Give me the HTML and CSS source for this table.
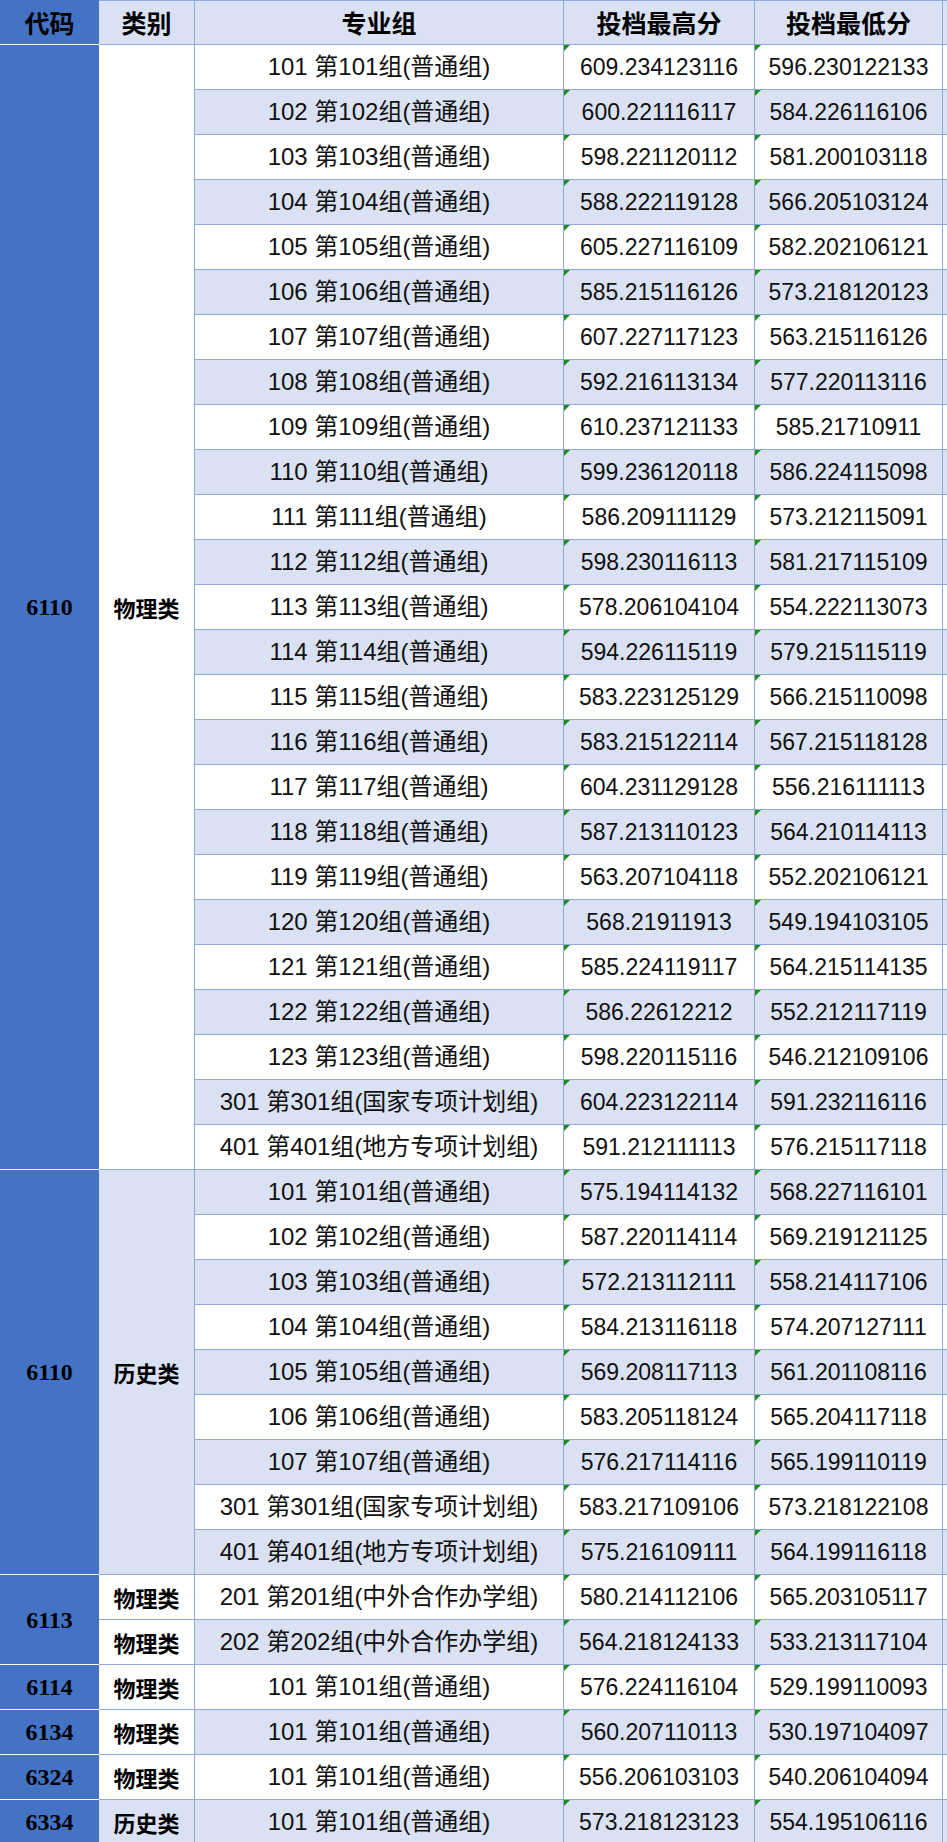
FILE: index.html
```html
<!DOCTYPE html>
<html lang="zh-CN">
<head>
<meta charset="utf-8">
<title>投档分数</title>
<link rel="stylesheet" href="styles.css">
</head>
<body>
<table class="sheet">
<colgroup>
<col class="c-code"><col class="c-cat"><col class="c-grp"><col class="c-max"><col class="c-min"><col class="c-pad">
</colgroup>
<thead>
<tr><th class="code">代码</th><th>类别</th><th>专业组</th><th>投档最高分</th><th>投档最低分</th><th class="pad"></th></tr>
</thead>
<tbody>
<tr><td class="code" rowspan="25">6110</td><td class="cat cat-w" rowspan="25">物理类</td><td class="grp">101 第101组(普通组)</td><td class="num">609.234123116</td><td class="num">596.230122133</td><td class="pad"></td></tr>
<tr><td class="grp">102 第102组(普通组)</td><td class="num">600.221116117</td><td class="num">584.226116106</td><td class="pad"></td></tr>
<tr><td class="grp">103 第103组(普通组)</td><td class="num">598.221120112</td><td class="num">581.200103118</td><td class="pad"></td></tr>
<tr><td class="grp">104 第104组(普通组)</td><td class="num">588.222119128</td><td class="num">566.205103124</td><td class="pad"></td></tr>
<tr><td class="grp">105 第105组(普通组)</td><td class="num">605.227116109</td><td class="num">582.202106121</td><td class="pad"></td></tr>
<tr><td class="grp">106 第106组(普通组)</td><td class="num">585.215116126</td><td class="num">573.218120123</td><td class="pad"></td></tr>
<tr><td class="grp">107 第107组(普通组)</td><td class="num">607.227117123</td><td class="num">563.215116126</td><td class="pad"></td></tr>
<tr><td class="grp">108 第108组(普通组)</td><td class="num">592.216113134</td><td class="num">577.220113116</td><td class="pad"></td></tr>
<tr><td class="grp">109 第109组(普通组)</td><td class="num">610.237121133</td><td class="num">585.21710911</td><td class="pad"></td></tr>
<tr><td class="grp">110 第110组(普通组)</td><td class="num">599.236120118</td><td class="num">586.224115098</td><td class="pad"></td></tr>
<tr><td class="grp">111 第111组(普通组)</td><td class="num">586.209111129</td><td class="num">573.212115091</td><td class="pad"></td></tr>
<tr><td class="grp">112 第112组(普通组)</td><td class="num">598.230116113</td><td class="num">581.217115109</td><td class="pad"></td></tr>
<tr><td class="grp">113 第113组(普通组)</td><td class="num">578.206104104</td><td class="num">554.222113073</td><td class="pad"></td></tr>
<tr><td class="grp">114 第114组(普通组)</td><td class="num">594.226115119</td><td class="num">579.215115119</td><td class="pad"></td></tr>
<tr><td class="grp">115 第115组(普通组)</td><td class="num">583.223125129</td><td class="num">566.215110098</td><td class="pad"></td></tr>
<tr><td class="grp">116 第116组(普通组)</td><td class="num">583.215122114</td><td class="num">567.215118128</td><td class="pad"></td></tr>
<tr><td class="grp">117 第117组(普通组)</td><td class="num">604.231129128</td><td class="num">556.216111113</td><td class="pad"></td></tr>
<tr><td class="grp">118 第118组(普通组)</td><td class="num">587.213110123</td><td class="num">564.210114113</td><td class="pad"></td></tr>
<tr><td class="grp">119 第119组(普通组)</td><td class="num">563.207104118</td><td class="num">552.202106121</td><td class="pad"></td></tr>
<tr><td class="grp">120 第120组(普通组)</td><td class="num">568.21911913</td><td class="num">549.194103105</td><td class="pad"></td></tr>
<tr><td class="grp">121 第121组(普通组)</td><td class="num">585.224119117</td><td class="num">564.215114135</td><td class="pad"></td></tr>
<tr><td class="grp">122 第122组(普通组)</td><td class="num">586.22612212</td><td class="num">552.212117119</td><td class="pad"></td></tr>
<tr><td class="grp">123 第123组(普通组)</td><td class="num">598.220115116</td><td class="num">546.212109106</td><td class="pad"></td></tr>
<tr><td class="grp">301 第301组(国家专项计划组)</td><td class="num">604.223122114</td><td class="num">591.232116116</td><td class="pad"></td></tr>
<tr><td class="grp">401 第401组(地方专项计划组)</td><td class="num">591.212111113</td><td class="num">576.215117118</td><td class="pad"></td></tr>
<tr><td class="code" rowspan="9">6110</td><td class="cat cat-b" rowspan="9">历史类</td><td class="grp">101 第101组(普通组)</td><td class="num">575.194114132</td><td class="num">568.227116101</td><td class="pad"></td></tr>
<tr><td class="grp">102 第102组(普通组)</td><td class="num">587.220114114</td><td class="num">569.219121125</td><td class="pad"></td></tr>
<tr><td class="grp">103 第103组(普通组)</td><td class="num">572.213112111</td><td class="num">558.214117106</td><td class="pad"></td></tr>
<tr><td class="grp">104 第104组(普通组)</td><td class="num">584.213116118</td><td class="num">574.207127111</td><td class="pad"></td></tr>
<tr><td class="grp">105 第105组(普通组)</td><td class="num">569.208117113</td><td class="num">561.201108116</td><td class="pad"></td></tr>
<tr><td class="grp">106 第106组(普通组)</td><td class="num">583.205118124</td><td class="num">565.204117118</td><td class="pad"></td></tr>
<tr><td class="grp">107 第107组(普通组)</td><td class="num">576.217114116</td><td class="num">565.199110119</td><td class="pad"></td></tr>
<tr><td class="grp">301 第301组(国家专项计划组)</td><td class="num">583.217109106</td><td class="num">573.218122108</td><td class="pad"></td></tr>
<tr><td class="grp">401 第401组(地方专项计划组)</td><td class="num">575.216109111</td><td class="num">564.199116118</td><td class="pad"></td></tr>
<tr><td class="code" rowspan="2">6113</td><td class="cat cat-w">物理类</td><td class="grp">201 第201组(中外合作办学组)</td><td class="num">580.214112106</td><td class="num">565.203105117</td><td class="pad"></td></tr>
<tr><td class="cat cat-w">物理类</td><td class="grp">202 第202组(中外合作办学组)</td><td class="num">564.218124133</td><td class="num">533.213117104</td><td class="pad"></td></tr>
<tr><td class="code">6114</td><td class="cat cat-w">物理类</td><td class="grp">101 第101组(普通组)</td><td class="num">576.224116104</td><td class="num">529.199110093</td><td class="pad"></td></tr>
<tr><td class="code">6134</td><td class="cat cat-w">物理类</td><td class="grp">101 第101组(普通组)</td><td class="num">560.207110113</td><td class="num">530.197104097</td><td class="pad"></td></tr>
<tr><td class="code">6324</td><td class="cat cat-w">物理类</td><td class="grp">101 第101组(普通组)</td><td class="num">556.206103103</td><td class="num">540.206104094</td><td class="pad"></td></tr>
<tr><td class="code">6334</td><td class="cat cat-b">历史类</td><td class="grp">101 第101组(普通组)</td><td class="num">573.218123123</td><td class="num">554.195106116</td><td class="pad"></td></tr>
</tbody>
</table>
</body>
</html>
```
FILE: styles.css
```css
html, body {
  margin: 0;
  padding: 0;
  background: #ffffff;
}

body {
  width: 947px;
  height: 1842px;
  overflow: hidden;
}

.sheet {
  border-collapse: collapse;
  table-layout: fixed;
  width: 947px;
  font-family: "Liberation Sans", "Noto Sans CJK SC", sans-serif;
  color: #111111;
}

.c-code { width: 98px; }
.c-cat { width: 96px; }
.c-grp { width: 369px; }
.c-max { width: 191px; }
.c-min { width: 188px; }
.c-pad { width: 5px; }

.sheet th,
.sheet td {
  border: 1px solid #8ea9db;
  padding: 0;
  text-align: center;
  vertical-align: middle;
  white-space: nowrap;
  overflow: hidden;
}

.sheet thead tr { height: 44px; }
.sheet tbody tr { height: 45px; }

.sheet th {
  background: #d9e1f2;
  font-family: "Noto Sans CJK SC", sans-serif;
  font-weight: 700;
  font-size: 25px;
  color: #000000;
  line-height: 1;
}

.sheet th.code,
.sheet td.code {
  background: #4472c4;
  border-color: #4472c4;
  border-bottom: 1px solid #ffffff;
}

.sheet td.code {
  font-family: "Liberation Serif", serif;
  font-weight: 700;
  font-size: 24px;
  color: #000000;
}

.sheet tbody tr td {
  background: #ffffff;
  font-size: 23px;
  line-height: 1;
}

.sheet tbody tr:nth-child(even) td {
  background: #d9e1f2;
}

.sheet tbody tr td.code {
  background: #4472c4;
  font-size: 24px;
}

.sheet tbody tr td.grp {
  font-size: 24px;
}

.sheet td.cat {
  font-family: "Noto Sans CJK SC", sans-serif;
  font-weight: 700;
  font-size: 22px;
  color: #000000;
}

.sheet tbody tr td.cat-w { background: #ffffff; }
.sheet tbody tr td.cat-b { background: #d9e1f2; }

.sheet td.num {
  position: relative;
}

.sheet td.num::before {
  content: "";
  position: absolute;
  left: 0;
  top: 0;
  border-top: 6px solid #1f8a1f;
  border-right: 6px solid transparent;
}

.sheet .pad {
  border-right: none;
}
```
